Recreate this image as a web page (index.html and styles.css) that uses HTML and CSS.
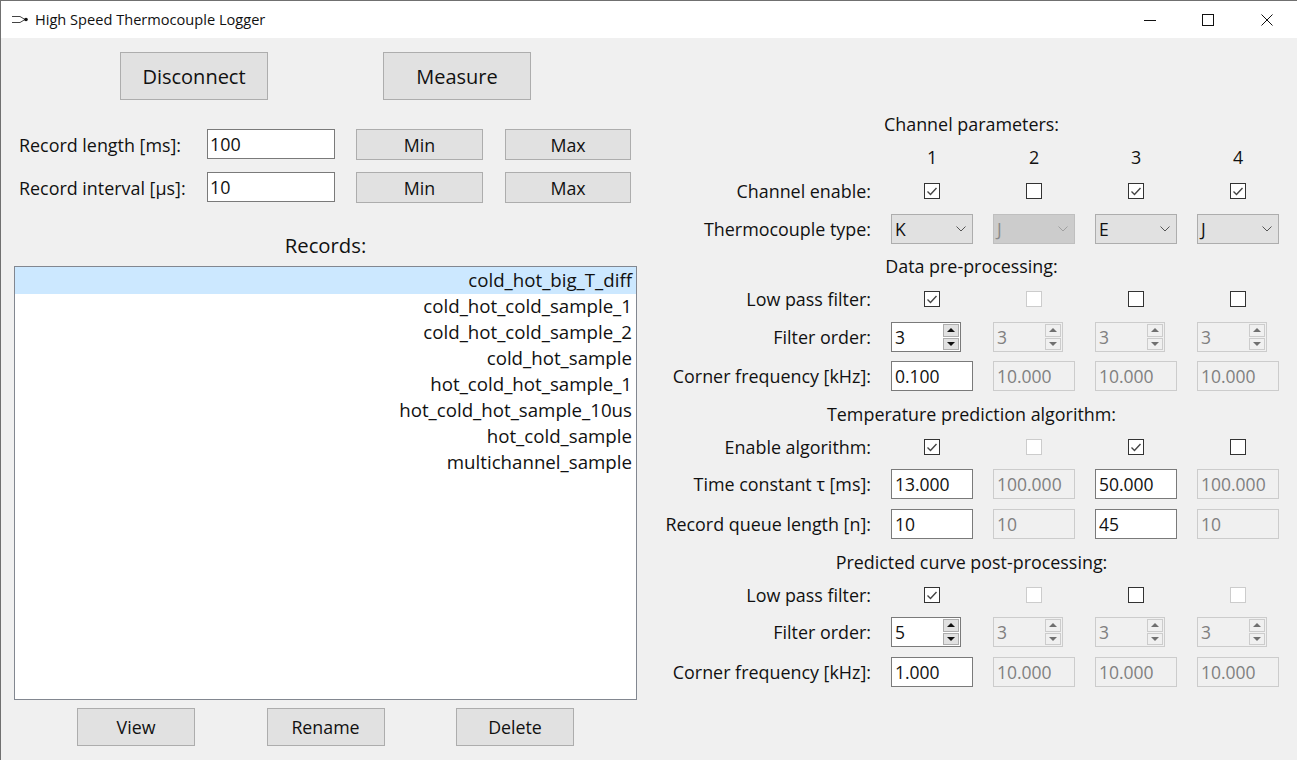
FILE: index.html
```html
<!DOCTYPE html>
<html>
<head>
  <title>High Speed Thermocouple Logger</title>
  <link rel="stylesheet" href="styles.css">
</head>
<body>
  <div class="window">
    <div class="titlebar">
      <svg class="app-icon" width="18" height="8" viewBox="0 0 18 8">
        <path d="M0 .5H8L13 3.5M0 6.5H8L13 3.5" fill="none" stroke="#444" stroke-width="1"/>
        <circle cx="14" cy="3.5" r="1.8" fill="#111"/>
      </svg>
      <span class="title">High Speed Thermocouple Logger</span>
      <div class="win-buttons">
        <svg class="win-min" width="12" height="12" viewBox="0 0 12 12"><path d="M0 6.5H12" stroke="#111"/></svg>
        <svg width="12" height="12" viewBox="0 0 12 12"><rect x=".5" y=".5" width="11" height="11" fill="none" stroke="#111"/></svg>
        <svg width="12" height="12" viewBox="0 0 12 12"><path d="M.5 .5L11.5 11.5M11.5 .5L.5 11.5" stroke="#111"/></svg>
      </div>
    </div>

    <div class="content">
      <div class="left">
        <div class="top-buttons">
          <button class="btn big">Disconnect</button>
          <button class="btn big">Measure</button>
        </div>
        <div class="record-row">
          <label>Record length [ms]:</label>
          <input class="text" type="text" value="100">
          <button class="btn small">Min</button>
          <button class="btn small">Max</button>
        </div>
        <div class="record-row">
          <label>Record interval [µs]:</label>
          <input class="text" type="text" value="10">
          <button class="btn small">Min</button>
          <button class="btn small">Max</button>
        </div>
        <div class="records-label">Records:</div>
        <ul class="records">
          <li class="selected">cold_hot_big_T_diff</li>
          <li>cold_hot_cold_sample_1</li>
          <li>cold_hot_cold_sample_2</li>
          <li>cold_hot_sample</li>
          <li>hot_cold_hot_sample_1</li>
          <li>hot_cold_hot_sample_10us</li>
          <li>hot_cold_sample</li>
          <li>multichannel_sample</li>
        </ul>
        <div class="bottom-buttons">
          <button class="btn action">View</button>
          <button class="btn action">Rename</button>
          <button class="btn action">Delete</button>
        </div>
      </div>

      <div class="params">
        <div class="heading">Channel parameters:</div>

        <div class="row-label"></div>
        <div class="cell num">1</div>
        <div class="cell num">2</div>
        <div class="cell num">3</div>
        <div class="cell num">4</div>

        <div class="row-label">Channel enable:</div>
        <div class="cell"><span class="check"><svg width="14" height="14" viewBox="0 0 14 14"><path d="M2.5 7.5L5.5 10.5L11.5 4" fill="none" stroke="#444" stroke-width="1.4"/></svg></span></div>
        <div class="cell"><span class="check"></span></div>
        <div class="cell"><span class="check"><svg width="14" height="14" viewBox="0 0 14 14"><path d="M2.5 7.5L5.5 10.5L11.5 4" fill="none" stroke="#444" stroke-width="1.4"/></svg></span></div>
        <div class="cell"><span class="check"><svg width="14" height="14" viewBox="0 0 14 14"><path d="M2.5 7.5L5.5 10.5L11.5 4" fill="none" stroke="#444" stroke-width="1.4"/></svg></span></div>

        <div class="row-label">Thermocouple type:</div>
        <div class="cell"><div class="select"><span>K</span><svg class="chevron" width="10" height="6" viewBox="0 0 10 6"><path d="M.5 .5L5 5L9.5 .5" fill="none" stroke="currentColor"/></svg></div></div>
        <div class="cell"><div class="select disabled"><span>J</span><svg class="chevron" width="10" height="6" viewBox="0 0 10 6"><path d="M.5 .5L5 5L9.5 .5" fill="none" stroke="currentColor"/></svg></div></div>
        <div class="cell"><div class="select"><span>E</span><svg class="chevron" width="10" height="6" viewBox="0 0 10 6"><path d="M.5 .5L5 5L9.5 .5" fill="none" stroke="currentColor"/></svg></div></div>
        <div class="cell"><div class="select"><span>J</span><svg class="chevron" width="10" height="6" viewBox="0 0 10 6"><path d="M.5 .5L5 5L9.5 .5" fill="none" stroke="currentColor"/></svg></div></div>

        <div class="heading">Data pre-processing:</div>

        <div class="row-label">Low pass filter:</div>
        <div class="cell"><span class="check"><svg width="14" height="14" viewBox="0 0 14 14"><path d="M2.5 7.5L5.5 10.5L11.5 4" fill="none" stroke="#444" stroke-width="1.4"/></svg></span></div>
        <div class="cell"><span class="check dis"></span></div>
        <div class="cell"><span class="check"></span></div>
        <div class="cell"><span class="check"></span></div>

        <div class="row-label">Filter order:</div>
        <div class="cell"><div class="spin"><span>3</span><div class="arrows"><div class="arrow up"></div><div class="arrow down"></div></div></div></div>
        <div class="cell"><div class="spin disabled"><span>3</span><div class="arrows"><div class="arrow up"></div><div class="arrow down"></div></div></div></div>
        <div class="cell"><div class="spin disabled"><span>3</span><div class="arrows"><div class="arrow up"></div><div class="arrow down"></div></div></div></div>
        <div class="cell"><div class="spin disabled"><span>3</span><div class="arrows"><div class="arrow up"></div><div class="arrow down"></div></div></div></div>

        <div class="row-label">Corner frequency [kHz]:</div>
        <div class="cell"><div class="field">0.100</div></div>
        <div class="cell"><div class="field disabled">10.000</div></div>
        <div class="cell"><div class="field disabled">10.000</div></div>
        <div class="cell"><div class="field disabled">10.000</div></div>

        <div class="heading">Temperature prediction algorithm:</div>

        <div class="row-label">Enable algorithm:</div>
        <div class="cell"><span class="check"><svg width="14" height="14" viewBox="0 0 14 14"><path d="M2.5 7.5L5.5 10.5L11.5 4" fill="none" stroke="#444" stroke-width="1.4"/></svg></span></div>
        <div class="cell"><span class="check dis"></span></div>
        <div class="cell"><span class="check"><svg width="14" height="14" viewBox="0 0 14 14"><path d="M2.5 7.5L5.5 10.5L11.5 4" fill="none" stroke="#444" stroke-width="1.4"/></svg></span></div>
        <div class="cell"><span class="check"></span></div>

        <div class="row-label">Time constant τ [ms]:</div>
        <div class="cell"><div class="field">13.000</div></div>
        <div class="cell"><div class="field disabled">100.000</div></div>
        <div class="cell"><div class="field">50.000</div></div>
        <div class="cell"><div class="field disabled">100.000</div></div>

        <div class="row-label">Record queue length [n]:</div>
        <div class="cell"><div class="field">10</div></div>
        <div class="cell"><div class="field disabled">10</div></div>
        <div class="cell"><div class="field">45</div></div>
        <div class="cell"><div class="field disabled">10</div></div>

        <div class="heading">Predicted curve post-processing:</div>

        <div class="row-label">Low pass filter:</div>
        <div class="cell"><span class="check"><svg width="14" height="14" viewBox="0 0 14 14"><path d="M2.5 7.5L5.5 10.5L11.5 4" fill="none" stroke="#444" stroke-width="1.4"/></svg></span></div>
        <div class="cell"><span class="check dis"></span></div>
        <div class="cell"><span class="check"></span></div>
        <div class="cell"><span class="check dis"></span></div>

        <div class="row-label">Filter order:</div>
        <div class="cell"><div class="spin"><span>5</span><div class="arrows"><div class="arrow up"></div><div class="arrow down"></div></div></div></div>
        <div class="cell"><div class="spin disabled"><span>3</span><div class="arrows"><div class="arrow up"></div><div class="arrow down"></div></div></div></div>
        <div class="cell"><div class="spin disabled"><span>3</span><div class="arrows"><div class="arrow up"></div><div class="arrow down"></div></div></div></div>
        <div class="cell"><div class="spin disabled"><span>3</span><div class="arrows"><div class="arrow up"></div><div class="arrow down"></div></div></div></div>

        <div class="row-label">Corner frequency [kHz]:</div>
        <div class="cell"><div class="field">1.000</div></div>
        <div class="cell"><div class="field disabled">10.000</div></div>
        <div class="cell"><div class="field disabled">10.000</div></div>
        <div class="cell"><div class="field disabled">10.000</div></div>
      </div>
    </div>
  </div>
</body>
</html>
```

FILE: styles.css
```css
* {
  box-sizing: border-box;
}

html, body {
  margin: 0;
  height: 100%;
  overflow: hidden;
}

body {
  font-family: "Open Sans", "Noto Sans", sans-serif;
  font-size: 17.9px;
  color: #111;
  background: #f0f0f0;
}

.window {
  width: 1297px;
  height: 760px;
  border-top: 1px solid #707070;
  border-left: 1px solid #707070;
  display: flex;
  flex-direction: column;
}

.titlebar {
  height: 37px;
  flex: none;
  background: white;
  display: flex;
  align-items: center;
  padding-left: 11px;
}

.app-icon {
  margin-right: 5px;
}

.title {
  font-size: 14.6px;
  line-height: 18px;
  padding-bottom: 2px;
  color: #111;
}

.win-buttons {
  margin-left: auto;
  display: flex;
  gap: 47px;
  padding-right: 24px;
}

.win-min {
  margin-right: -1px;
}

.content {
  flex: 1;
  display: flex;
}

.left {
  width: 663px;
  flex: none;
  padding: 14px 0 0 13px;
}

.btn {
  font-family: inherit;
  color: #111;
  background: #e1e1e1;
  border: 1px solid #adadad;
  padding: 0;
  font-size: 17.8px;
}

.top-buttons {
  display: flex;
  gap: 115px;
  padding-left: 106px;
  margin-bottom: 29px;
}

.btn.big {
  width: 148px;
  height: 48px;
  font-size: 20px;
}

.record-row {
  display: flex;
  align-items: flex-start;
  height: 31px;
  margin-bottom: 12px;
}

.record-row label {
  width: 193px;
  padding-left: 5px;
  line-height: 33px;
  white-space: nowrap;
}

.text {
  width: 128px;
  height: 30px;
  border: 1px solid #7a7a7a;
  background: white;
  font: inherit;
  color: #111;
  padding: 0 2px;
  margin-right: 21px;
  outline: none;
}

.btn.small {
  width: 127px;
  height: 31px;
  margin-right: 22px;
}

.btn.small:last-child {
  width: 126px;
  margin-right: 0;
}

.records-label {
  font-size: 20.3px;
  text-align: center;
  width: 623px;
  margin-top: 29px;
  height: 34px;
  line-height: 26px;
}

.records {
  list-style: none;
  margin: 0;
  padding: 0;
  width: 623px;
  height: 434px;
  background: white;
  border: 1px solid #828790;
  font-size: 18.7px;
}

.records li {
  height: 26px;
  line-height: 24px;
  text-align: right;
  padding-right: 4px;
}

.records li.selected {
  height: 27px;
  padding-top: 1px;
  background: #cce8ff;
}

.bottom-buttons {
  display: flex;
  margin-top: 8px;
  padding-left: 63px;
  gap: 71.5px;
}

.btn.action {
  width: 118px;
  height: 38px;
}

.params {
  margin-top: 70px;
  width: 615px;
  display: grid;
  grid-template-columns: 207px repeat(4, 82px);
  column-gap: 20px;
  grid-template-rows: 32px 36px 30px 46px 28px 38px 38px 40px 36px 30px 44px 36px 40px 26px 48px 32px;
  align-items: center;
}

.heading {
  grid-column: 1 / -1;
  text-align: center;
}

.row-label {
  text-align: right;
  white-space: nowrap;
}

.cell {
  display: flex;
  justify-content: center;
}

.cell.num {
  padding-bottom: 2px;
}

.check {
  width: 16px;
  height: 16px;
  border: 1px solid #333;
  background: white;
  display: flex;
  align-items: center;
  justify-content: center;
}

.check.dis {
  border-color: #ccc;
}

.select, .spin, .field {
  height: 30px;
  display: flex;
  align-items: center;
  width: 100%;
  padding-left: 3px;
  font-size: 17.5px;
}

.select {
  background: #e1e1e1;
  border: 1px solid #adadad;
  justify-content: space-between;
  padding-right: 6px;
  color: #111;
}

.chevron {
  color: #555;
}

.select.disabled {
  background: #cccccc;
  border-color: #bfbfbf;
  color: #8a8a8a;
}

.select.disabled .chevron {
  color: #a0a0a0;
}

.field {
  background: white;
  border: 1px solid #7a7a7a;
}

.field.disabled, .spin.disabled {
  background: #f0f0f0;
  border: 1px solid #cccccc;
  color: #808080;
}

.spin {
  width: 70px;
  margin-right: 12px;
  background: white;
  border: 1px solid #7a7a7a;
  justify-content: space-between;
  padding-right: 1px;
}

.arrows {
  width: 16px;
  height: 26px;
  display: flex;
  flex-direction: column;
  gap: 1px;
}

.arrow {
  flex: 1;
  background: #e1e1e1;
  border: 1px solid #adadad;
  display: flex;
  align-items: center;
  justify-content: center;
}

.arrow::before {
  content: "";
  border-left: 4px solid transparent;
  border-right: 4px solid transparent;
}

.arrow.up::before {
  border-bottom: 4px solid #111;
}

.arrow.down::before {
  border-top: 4px solid #111;
}

.spin.disabled .arrow {
  background: #f0f0f0;
  border-color: #cccccc;
}

.spin.disabled .arrow.up::before {
  border-bottom-color: #707070;
}

.spin.disabled .arrow.down::before {
  border-top-color: #707070;
}
```
